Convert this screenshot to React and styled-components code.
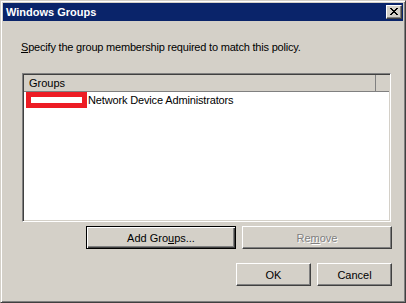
import React from "react";
import styled, { createGlobalStyle } from "styled-components";

const Global = createGlobalStyle`
  html, body {
    margin: 0;
    padding: 0;
    width: 406px;
    height: 303px;
    overflow: hidden;
    background: #d4d0c8;
    font-family: "Liberation Sans", Arial, sans-serif;
  }
`;

const Window = styled.div`
  box-sizing: border-box;
  width: 406px;
  height: 303px;
  background: #d4d0c8;
  border: 1px solid;
  border-color: #d4d0c8 #404040 #404040 #d4d0c8;
  box-shadow: inset 1px 1px #fff, inset -1px -1px #808080;
  padding: 2px;
  display: flex;
  flex-direction: column;
`;

const TitleBar = styled.div`
  height: 18px;
  background: #0a246a;
  display: flex;
  align-items: center;
  padding: 0 1px 0 3px;
`;

const Title = styled.div`
  flex: 1;
  color: #fff;
  font-weight: bold;
  font-size: 11px;
  line-height: 13px;
`;

const CloseBtn = styled.div`
  box-sizing: border-box;
  width: 16px;
  height: 14px;
  background: #d4d0c8;
  border: 1px solid;
  border-color: #fff #404040 #404040 #fff;
  box-shadow: inset -1px -1px #808080;
  display: flex;
  align-items: center;
  justify-content: center;
  padding: 0 1px 1px 0;
`;

const Body = styled.div`
  flex: 1;
  display: flex;
  flex-direction: column;
  padding: 0 12px 0 19px;
`;

const Label = styled.div`
  margin: 20px 0 0 -1px;
  font-size: 11px;
  line-height: 13px;
  letter-spacing: -0.2px;
  color: #000;
`;

const List = styled.div`
  box-sizing: border-box;
  margin-top: 19px;
  height: 149px;
  background: #fff;
  border: 1px solid;
  border-color: #808080 #fff #fff #808080;
  box-shadow: inset 1px 1px #404040, inset -1px -1px #d4d0c8;
  padding: 1px;
  display: flex;
  flex-direction: column;
`;

const Header = styled.div`
  display: flex;
  height: 16px;
  background: #d4d0c8;
  border-bottom: 1px solid #808080;
`;

const HeaderCell = styled.div`
  width: ${p => p.$w}px;
  ${p => p.$w ? "" : "flex: 1;"}
  box-sizing: border-box;
  padding-left: 5px;
  font-size: 11px;
  line-height: 16px;
  color: #000;
  border-right: ${p => p.$w ? "1px solid #808080" : "none"};
`;

const Row = styled.div`
  display: flex;
  align-items: center;
  height: 16px;
  padding-left: 2px;
  font-size: 11px;
  letter-spacing: -0.15px;
  color: #000;
`;

const Redact = styled.span`
  width: 51px;
  height: 6px;
  border: 5px solid #ed1c24;
  background: #fff;
  margin-right: 1px;
`;

const ButtonRow = styled.div`
  display: flex;
  justify-content: flex-end;
  gap: 6px;
  margin: ${p => p.$top}px -1px 0 0;
`;

const Button = styled.div`
  box-sizing: border-box;
  width: ${p => p.$w}px;
  height: 23px;
  background: #d4d0c8;
  display: flex;
  align-items: center;
  justify-content: center;
  font-size: 11px;
  color: ${p => (p.$disabled ? "#808080" : "#000")};
  text-shadow: ${p => (p.$disabled ? "1px 1px #fff" : "none")};
  border: 1px solid;
  border-color: ${p => (p.$default ? "#000" : "#fff #404040 #404040 #fff")};
  box-shadow: ${p =>
    p.$default
      ? "inset 1px 1px #fff, inset -1px -1px #404040, inset -2px -2px #808080"
      : "inset -1px -1px #808080"};
`;

function CloseGlyph() {
  const rows = [
    "XX....XX",
    ".XX..XX.",
    "..XXXX..",
    "...XX...",
    "..XXXX..",
    ".XX..XX.",
    "XX....XX",
  ];
  return (
    <svg width="8" height="7" viewBox="0 0 8 7" shapeRendering="crispEdges">
      {rows.flatMap((r, y) =>
        r.split("").map((c, x) =>
          c === "X" ? <rect key={`${x}-${y}`} x={x} y={y} width="1" height="1" fill="#000" /> : null
        )
      )}
    </svg>
  );
}

export default function App() {
  return (
    <>
      <Global />
      <Window>
        <TitleBar>
          <Title>Windows Groups</Title>
          <CloseBtn><CloseGlyph /></CloseBtn>
        </TitleBar>
        <Body>
          <Label><u>S</u>pecify the group membership required to match this policy.</Label>
          <List>
            <Header>
              <HeaderCell $w={352}>Groups</HeaderCell>
              <HeaderCell />
            </Header>
            <Row><Redact />Network Device Administrators</Row>
          </List>
          <ButtonRow $top={4}>
            <Button $w={150} $default>Add Gro<u>u</u>ps...</Button>
            <Button $w={150} $disabled>Re<u>m</u>ove</Button>
          </ButtonRow>
          <ButtonRow $top={14}>
            <Button $w={75}>OK</Button>
            <Button $w={75}>Cancel</Button>
          </ButtonRow>
        </Body>
      </Window>
    </>
  );
}
